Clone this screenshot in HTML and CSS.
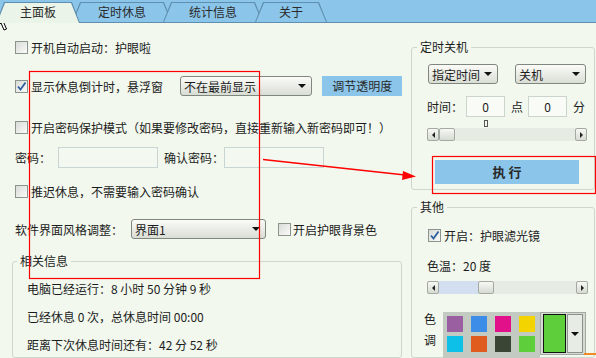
FILE: index.html
```html
<!DOCTYPE html>
<html lang="zh-CN">
<head>
<meta charset="UTF-8">
<title>护眼啦</title>
<link rel="stylesheet" href="styles.css">
</head>
<body>
<div class="tabs">
  <div class="tab tab-main active">主面板</div>
  <div class="tab tab-rest">定时休息</div>
  <div class="tab tab-stat">统计信息</div>
  <div class="tab tab-about">关于</div>
</div>

<div class="main">
  <div class="left">
    <div class="row r1"><span class="check"></span>开机自动启动：护眼啦</div>
    <div class="row r2">
      <span class="check on"><svg viewBox="0 0 11 11"><path d="M2 5.5 L4.5 8.5 L9.5 1.5" fill="none" stroke="#2f5f9f" stroke-width="1.8"/></svg></span>显示休息倒计时，悬浮窗
      <div class="select sel-top">不在最前显示<span class="arrow"></span></div>
      <div class="btn btn-alpha">调节透明度</div>
    </div>
    <div class="row r3"><span class="check"></span>开启密码保护模式（如果要修改密码，直接重新输入新密码即可！）</div>
    <div class="row r4">
      密码：<div class="field pwd1"></div>
      <span class="lbl-confirm">确认密码：</span><div class="field pwd2"></div>
    </div>
    <div class="row r5"><span class="check"></span>推迟休息，不需要输入密码确认</div>
    <div class="row r6">
      软件界面风格调整：
      <div class="select sel-skin">界面1<span class="arrow"></span></div>
      <span class="check bg-check"></span>开启护眼背景色
    </div>
    <fieldset class="group info">
      <legend>相关信息</legend>
      <div class="info-line first">电脑已经运行：8 小时 50 分钟 9 秒</div>
      <div class="info-line">已经休息 0 次，总休息时间 00:00</div>
      <div class="info-line">距离下次休息时间还有：42 分 52 秒</div>
    </fieldset>
  </div>

  <div class="right">
    <fieldset class="group shutdown">
      <legend>定时关机</legend>
      <div class="sel-row">
        <div class="select sel-mode">指定时间<span class="arrow"></span></div>
        <div class="select sel-action">关机<span class="arrow"></span></div>
      </div>
      <div class="time-row">
        时间：<div class="field num num-h">0</div>
        <span class="unit">点</span><div class="field num num-m">0</div>
        <span class="unit">分</span>
      </div>
      <div class="tick"></div>
      <div class="scroll">
        <span class="sbtn"><span class="tri-l"></span></span>
        <span class="thumb"></span>
        <span class="track"></span>
        <span class="sbtn"><span class="tri-r"></span></span>
      </div>
      <div class="btn exec">执 行</div>
    </fieldset>

    <fieldset class="group other">
      <legend>其他</legend>
      <div class="chk-row">
        <span class="check on"><svg viewBox="0 0 11 11"><path d="M2 5.5 L4.5 8.5 L9.5 1.5" fill="none" stroke="#2f5f9f" stroke-width="1.8"/></svg></span>开启：护眼滤光镜
      </div>
      <div class="temp">色温：20 度</div>
      <div class="scroll slider">
        <span class="sbtn"><span class="tri-l"></span></span>
        <span class="fill"></span>
        <span class="thumb"></span>
        <span class="track"></span>
        <span class="sbtn"><span class="tri-r"></span></span>
      </div>
      <div class="tone">
        <div class="tone-label"><span>色</span><span>调</span></div>
        <div class="swatches">
          <span class="sw" style="background:#9a5fa0"></span>
          <span class="sw" style="background:#3b8de8"></span>
          <span class="sw" style="background:#e2118a"></span>
          <span class="sw" style="background:#f4d400"></span>
          <span class="sw" style="background:#0cc0e8"></span>
          <span class="sw" style="background:#e05b1e"></span>
          <span class="sw" style="background:#3a4536"></span>
          <span class="sw" style="background:#5fce3b"></span>
        </div>
        <div class="picked">
          <span class="picked-color"></span>
          <span class="picked-arrow"><span class="arrow"></span></span>
        </div>
      </div>
    </fieldset>
  </div>
</div>

<svg class="marks" width="596" height="358" viewBox="0 0 596 358">
  <rect x="29.5" y="71.5" width="230" height="207" fill="none" stroke="#ff0000" stroke-width="1.2"/>
  <rect x="432.5" y="156.5" width="163" height="37" fill="none" stroke="#ff0000" stroke-width="1.2"/>
  <line x1="263" y1="159.5" x2="405" y2="175" stroke="#ff0000" stroke-width="1.3"/>
  <polygon points="403,171 416,176.5 402,180" fill="#ff0000"/>
  <rect x="584" y="353" width="12" height="2" fill="#f08a24"/>
  <path d="M-3 10 L-3 27 L1 23 L4 30 L6.5 29 L3.5 22 L8.5 22 Z" fill="#fff" stroke="#000" stroke-width="1"/>
</svg>
</body>
</html>
```

FILE: styles.css
```css
* {
  box-sizing: border-box;
}
body {
  margin: 0;
  width: 596px;
  height: 358px;
  overflow: hidden;
  position: relative;
  background: #f2f8ee;
  font-family: "Noto Sans CJK SC", "Liberation Sans", sans-serif;
  font-size: 12px;
  color: #1c1c1c;
}

/* tabs */
.tabs {
  height: 23px;
  background: #8bc6ea;
  border-bottom: 1px solid #5f8fae;
  display: flex;
  align-items: flex-end;
}
.tab {
  position: relative;
  height: 20px;
  line-height: 20px;
  text-align: center;
  color: #2a2a2a;
  background: #5f8fae;
  clip-path: polygon(8px 0, calc(100% - 8px) 0, 100% 100%, 0 100%);
}
.tab::before {
  content: "";
  position: absolute;
  top: 1px;
  left: 1px;
  right: 1px;
  bottom: 0;
  z-index: -1;
  background: #8bc6ea;
  clip-path: polygon(8px 0, calc(100% - 8px) 0, 100% 100%, 0 100%);
}
.tab.active {
  z-index: 2;
  height: 21px;
  margin-bottom: -1px;
}
.tab.active::before {
  background: #eaf4e8;
}
.tab-main { width: 84px; margin-left: -4px; }
.tab-rest { width: 100px; margin-left: -8px; }
.tab-stat { width: 100px; margin-left: -9px; }
.tab-about { width: 72px; margin-left: -8px; }

/* layout */
.main {
  display: flex;
}
.left {
  width: 402px;
  padding-left: 12px;
}
.right {
  width: 184px;
  margin-left: 9px;
}
.row {
  display: flex;
  align-items: center;
  margin-left: 3px;
  white-space: nowrap;
}
.r1 { margin-top: 14px; height: 20px; }
.r2 { margin-top: 18px; height: 22px; }
.r3 { margin-top: 20px; height: 20px; }
.r4 { margin-top: 9px; height: 22px; }
.r5 { margin-top: 13px; height: 20px; }
.r6 { margin-top: 17px; height: 22px; }

/* controls */
.check {
  width: 13px;
  height: 13px;
  flex: none;
  margin-right: 3px;
  border: 1px solid #8d948d;
  background: linear-gradient(135deg, #d8dcd7, #fbfbfa);
}
.check svg {
  display: block;
  width: 11px;
  height: 11px;
}
.select {
  height: 20px;
  display: flex;
  align-items: center;
  justify-content: space-between;
  padding: 0 5px 0 3px;
  border: 1px solid #7f877f;
  border-radius: 3px;
  background: linear-gradient(#fbfbf8, #d9ded5);
  white-space: nowrap;
}
.arrow {
  width: 0;
  height: 0;
  border-top: 4px solid #111;
  border-left: 4px solid transparent;
  border-right: 4px solid transparent;
}
.sel-top { width: 133px; margin-left: 17px; }
.sel-skin { width: 135px; height: 20px; margin-left: 8px; }
.bg-check { margin-left: 12px; margin-right: 2px; }
.btn {
  background: #8bc6ea;
  color: #2a2a2a;
  text-align: center;
}
.btn-alpha {
  width: 80px;
  height: 20px;
  line-height: 20px;
  margin-left: 10px;
}
.field {
  height: 21px;
  border: 1px solid #c9d5d3;
  background: #f3f9f1;
}
.pwd1 { width: 100px; margin-left: 7px; }
.lbl-confirm { margin-left: 6px; }
.pwd2 { width: 100px; }

/* group boxes */
.group {
  margin: 0;
  border: 1px solid #cdd7cc;
  border-radius: 3px;
  padding: 0 0 0 14px;
}
.group legend {
  padding: 0 3px;
  margin-left: -10px;
  line-height: 18px;
}
.info {
  margin-top: 12px;
  height: 106px;
}
.info-line {
  line-height: 28px;
  white-space: nowrap;
}
.info-line.first {
  margin-top: 5px;
}
.shutdown {
  margin-top: 15px;
  padding: 0 0 5px 15px;
}
.other {
  margin-top: 8px;
  padding: 0 0 0 15px;
  height: 160px;
}

.sel-row {
  display: flex;
  margin-top: 8px;
}
.sel-mode { width: 70px; margin-left: 1px; }
.sel-action { width: 71px; margin-left: 17px; }
.time-row {
  display: flex;
  align-items: center;
  height: 21px;
  margin-top: 12px;
}
.num {
  width: 39px;
  margin-left: 3px;
  text-align: center;
  line-height: 19px;
  background: #f8fbf6;
  border-color: #ccd5cc;
}
.unit { margin-left: 6px; }
.num-m { margin-left: 5px; }
.tick {
  width: 4px;
  height: 7px;
  margin: 3px 0 0 57px;
  border: 1px solid #555;
}
.scroll {
  display: flex;
  width: 160px;
  height: 13px;
  margin-top: 1px;
  background: #e6ece4;
}
.sbtn, .thumb {
  width: 12px;
  flex: none;
  display: flex;
  align-items: center;
  justify-content: center;
  border: 1px solid #a3aaa2;
  border-radius: 2px;
  background: linear-gradient(#f6f8f4, #d6dbd3);
}
.thumb {
  width: 16px;
}
.track {
  flex: 1;
}
.tri-l, .tri-r {
  width: 0;
  height: 0;
  border-top: 3px solid transparent;
  border-bottom: 3px solid transparent;
}
.tri-l { border-right: 3px solid #222; }
.tri-r { border-left: 3px solid #222; }
.exec {
  width: 144px;
  height: 24px;
  line-height: 24px;
  margin: 19px 0 0 8px;
  font-weight: bold;
  font-size: 13px;
}

.chk-row {
  display: flex;
  align-items: center;
  height: 16px;
  margin: 11px 0 0 1px;
}
.temp {
  height: 16px;
  line-height: 16px;
  margin-top: 15px;
}
.slider {
  margin-top: 7px;
  width: 161px;
}
.fill {
  width: 39px;
  background: #d3def0;
}
.tone {
  display: flex;
  margin: 18px 0 0 -3px;
}
.tone-label {
  display: flex;
  flex-direction: column;
  width: 12px;
  margin-top: -4px;
  line-height: 21px;
}
.swatches {
  width: 97px;
  height: 46px;
  margin-left: 7px;
  padding: 4px 0 0 4px;
  background: #c3cac2;
  display: grid;
  grid-template-columns: repeat(4, 16px);
  grid-auto-rows: 16px;
  gap: 4px 8px;
}
.picked {
  width: 46px;
  height: 43px;
  display: flex;
  padding: 1px 2px 1px 2px;
  border: 1px solid #a3aaa2;
  background: #d5dad3;
}
.picked-color {
  width: 24px;
  border: 1px solid #111;
  background: #5fce3b;
}
.picked-arrow {
  width: 16px;
  margin-left: 1px;
  display: flex;
  align-items: center;
  justify-content: center;
  border: 1px solid #8b918b;
  background: #e7ece5;
}

/* annotations drawn over the window */
.marks {
  position: absolute;
  left: 0;
  top: 0;
  pointer-events: none;
  overflow: visible;
}
```
